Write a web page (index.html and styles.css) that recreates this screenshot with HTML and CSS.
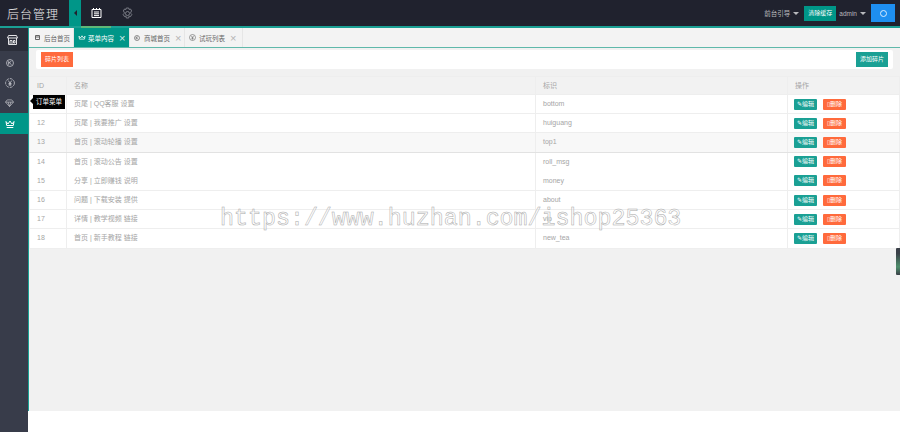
FILE: index.html
```html
<!DOCTYPE html>
<html lang="zh-CN">
<head>
<meta charset="utf-8">
<title>后台管理</title>
<link rel="stylesheet" href="styles.css">
</head>
<body>
<header class="header">
  <div class="logo">后台管理</div>
  <div class="toggle"><span class="toggle-arrow"></span></div>
  <div class="nav-icon nav-icon-active">
    <svg width="11" height="10" viewBox="0 0 11 10" fill="none" stroke="#fff" stroke-width="1"><path d="M1 1.500h9v8H1zM2.500 0v2M5.500 0v2M8.500 0v2M3 4h5M3 5.800h5M3 7.600h5"/></svg>
  </div>
  <div class="nav-icon nav-icon-gear">
    <svg width="13" height="13" viewBox="0 0 13 13" fill="none" stroke="#8d8f98" stroke-width=".8"><path d="M5.300 1h2.400l.4 1.500 1.400-.5 1.200 2-1 1.100.1 1.300 1 1-1.200 2.100-1.500-.4-.4 1.900H5.300l-.4-1.900-1.500.4-1.200-2.100 1-1 .1-1.300-1-1.100 1.200-2 1.400.5z"/><circle cx="6.500" cy="6.500" r="2"/></svg>
  </div>
  <div class="header-right">
    <span class="top-link">前台引导<i class="caret"></i></span>
    <span class="clear-btn">清除缓存</span>
    <span class="top-link admin">admin<i class="caret"></i></span>
    <span class="refresh"><span class="refresh-ring"></span></span>
  </div>
</header>
<div class="body-row">
  <aside class="sidebar">
    <div class="side-top">
      <svg width="11" height="10" viewBox="0 0 11 10" fill="none" stroke="#e4e4e6" stroke-width="1"><path d="M1.500.500h8l1 2.500H.5zM1.500 3v6.500h8V3M3 5.500h2v4H3zM6.500 5.500h1.500V8H6.500z"/></svg>
    </div>
    <div class="side-item">
      <svg width="8" height="8" viewBox="0 0 9 9" fill="none" stroke="#c9cad0" stroke-width=".9"><circle cx="4.500" cy="4.500" r="3.900"/><path d="M3 2.500v4M3 4.500l3-2M3.800 4l2.200 2.500"/></svg>
    </div>
    <div class="side-item">
      <svg width="10" height="10" viewBox="0 0 10 10" fill="none" stroke="#c9cad0" stroke-width=".8"><circle cx="5" cy="5" r="4.400" stroke-dasharray="3 1"/><path d="M3.200 2.500L5 5l1.800-2.500M5 5v3M3.500 5.500h3M3.500 6.800h3"/></svg>
    </div>
    <div class="side-item">
      <svg width="9" height="8" viewBox="0 0 10 9" fill="none" stroke="#b5b6bc" stroke-width=".9"><path d="M2.500 1h5L9.500 3.500 5 8.500.5 3.500zM.5 3.500h9M3.500 3.500L5 8.500l1.500-5"/></svg>
    </div>
    <div class="side-item side-active">
      <svg width="10" height="8" viewBox="0 0 10 8" fill="none" stroke="#fff" stroke-width="1"><path d="M1 1.500l2 2.500L5 1l2 3 2-2.500-.7 4H1.700zM1.700 7.500h6.600"/></svg>
    </div>
  </aside>
  <main class="main">
    <nav class="tabs">
      <div class="tab tab-home">
        <svg class="tab-icon" width="5" height="5" viewBox="0 0 5 5" fill="none" stroke="#555" stroke-width=".9"><path d="M.5.500h4v4h-4zM.5 2h4"/></svg>后台首页
      </div>
      <div class="tab tab-active">
        <svg class="tab-icon" width="8" height="6" viewBox="0 0 10 8" fill="none" stroke="#fff" stroke-width="1"><path d="M1 1.500l2 2.500L5 1l2 3 2-2.500-.7 4H1.700z"/></svg>菜单内容<span class="close">×</span>
      </div>
      <div class="tab tab-shop">
        <svg class="tab-icon" width="6" height="6" viewBox="0 0 6 6" fill="none" stroke="#666" stroke-width=".7"><circle cx="3" cy="3" r="2.500"/><path d="M2.200 1.700v2.600M2.200 3l1.700-1.300M2.600 2.800l1.300 1.500"/></svg>商城首页<span class="close">×</span>
      </div>
      <div class="tab tab-list">
        <svg class="tab-icon" width="7" height="7" viewBox="0 0 7 7" fill="none" stroke="#777" stroke-width=".7"><circle cx="3.500" cy="3.500" r="3"/><path d="M2.300 1.800l1.200 1.700 1.200-1.700M3.500 3.500v2M2.500 3.800h2M2.500 4.700h2"/></svg>试玩列表<span class="close">×</span>
      </div>
    </nav>
    <section class="toolbar">
      <span class="btn btn-orange">碎片列表</span>
      <span class="btn btn-teal">添加碎片</span>
    </section>
    <table class="data">
      <colgroup><col class="c-id"><col class="c-name"><col class="c-key"><col class="c-op"></colgroup>
      <thead>
        <tr><th>ID</th><th>名称</th><th>标识</th><th>操作</th></tr>
      </thead>
      <tbody>
        <tr><td>11</td><td>页尾 | QQ客服 设置</td><td>bottom</td><td class="ops"><span class="act act-edit">✎编辑</span><span class="act act-del">▯删除</span></td></tr>
        <tr><td>12</td><td>页尾 | 我要推广 设置</td><td>huiguang</td><td class="ops"><span class="act act-edit">✎编辑</span><span class="act act-del">▯删除</span></td></tr>
        <tr class="row-hover"><td>13</td><td>首页 | 滚动轮播 设置</td><td>top1</td><td class="ops"><span class="act act-edit">✎编辑</span><span class="act act-del">▯删除</span></td></tr>
        <tr class="row-noline"><td>14</td><td>首页 | 滚动公告 设置</td><td>roll_msg</td><td class="ops"><span class="act act-edit">✎编辑</span><span class="act act-del">▯删除</span></td></tr>
        <tr><td>15</td><td>分享 | 立即赚钱 说明</td><td>money</td><td class="ops"><span class="act act-edit">✎编辑</span><span class="act act-del">▯删除</span></td></tr>
        <tr><td>16</td><td>问题 | 下载安装 提供</td><td>about</td><td class="ops"><span class="act act-edit">✎编辑</span><span class="act act-del">▯删除</span></td></tr>
        <tr><td>17</td><td>详情 | 教学视频 链接</td><td>vip</td><td class="ops"><span class="act act-edit">✎编辑</span><span class="act act-del">▯删除</span></td></tr>
        <tr><td>18</td><td>首页 | 新手教程 链接</td><td>new_tea</td><td class="ops"><span class="act act-edit">✎编辑</span><span class="act act-del">▯删除</span></td></tr>
      </tbody>
    </table>
  </main>
</div>
<div class="tooltip">订单菜单</div>
<div class="side-handle"></div>
<div class="watermark">https://www.huzhan.com/ishop25363</div>
</body>
</html>
```
FILE: styles.css
```css
* { box-sizing: border-box; }
html, body { margin: 0; height: 432px; overflow: hidden; background: #fff; }
body { position: relative; font-family: "Liberation Sans", "Noto Sans CJK SC", sans-serif; font-size: 7px; color: #999; }

.header { display: flex; height: 28px; background: #20222e; box-shadow: inset 0 -2px 0 #1aa094; }
.logo { width: 69px; padding: 6px 0 0 7px; font-size: 12px; line-height: 15px; letter-spacing: 1px; font-weight: 300; color: #f0f0f0; font-family: "Noto Sans CJK SC", sans-serif; }
.toggle { width: 12px; height: 26px; background: #009688; display: flex; align-items: center; justify-content: center; }
.toggle-arrow { width: 0; height: 0; border-style: solid; border-width: 3px 3px 3px 0; border-color: transparent #20222e transparent transparent; }
.nav-icon { width: 30px; height: 28px; padding-bottom: 2px; display: flex; align-items: center; justify-content: center; }
.nav-icon-active { border-bottom: 2px solid #5fb878; padding: 0 0 1px; }
.nav-icon-gear { padding-left: 2px; }
.header-right { margin-left: auto; display: flex; align-items: flex-start; padding-right: 5px; }
.top-link { color: #b8b9bd; height: 26px; display: flex; align-items: center; font-size: 6.500px; }
.caret { margin-left: 3px; margin-top: 1px; width: 0; height: 0; border-style: solid; border-width: 3px 3px 0; border-color: #b8b9bd transparent transparent; }
.clear-btn { margin: 6px 3px 0 5px; width: 32px; height: 15px; background: #009688; color: #fff; font-size: 6px; line-height: 15px; text-align: center; }
.refresh { margin: 4px 0 0 5px; width: 24px; height: 18px; background: #1e8ff0; display: flex; align-items: center; justify-content: center; }
.refresh-ring { width: 7px; height: 7px; border: 1px solid #d8ecff; border-radius: 50%; }

.body-row { display: flex; height: 404px; }
.sidebar { width: 28px; flex: none; background: #383c4a; }
.side-top { height: 23px; padding-left: 7px; background: #2b2e39; display: flex; align-items: center; }
.side-item { height: 20px; padding-left: 5px; display: flex; align-items: center; }
.side-item:nth-child(2) { margin-top: 2px; padding-left: 6px; }
.side-active { background: #009688; height: 21px; }

.main { flex: 1; height: 383px; background: #f1f1f1; border-left: 1px solid #1aa094; min-width: 0; }
.tabs { display: flex; height: 20px; background: #f3f3f3; border-bottom: 1px solid #5fb8aa; color: #666; font-size: 6.500px; }
.tab { display: flex; align-items: center; height: 19px; border-right: 1px solid #e6e6e6; padding-left: 6px; white-space: nowrap; }
.tab-home { width: 45px; }
.tab-active { width: 56px; background: #009688; color: #fff; padding-left: 4px; }
.tab-shop { width: 55px; padding-left: 4px; }
.tab-list { width: 58px; padding-left: 4px; }
.tab-icon { margin-right: 4px; flex: none; }
.tab-active .tab-icon { margin-right: 2px; }
.tab-list .tab-icon { margin-right: 3px; }
.close { margin-left: 5px; font-size: 11px; line-height: 10px; color: #b5b5b5; }
.tab-active .close { color: #cfe9e6; }

.toolbar { display: flex; justify-content: space-between; align-items: center; margin: 2px 7px 7px; height: 19px; padding: 0 5px; background: #fff; border-radius: 2px; }
.btn { height: 15px; width: 32px; color: #fff; font-size: 6px; line-height: 15px; text-align: center; }
.btn-orange { background: #ff6a3c; }
.btn-teal { background: #1aa094; }

.data { width: 871px; table-layout: fixed; border-collapse: collapse; background: #fff; }
.c-id { width: 37px; }
.c-key { width: 252px; }
.c-op { width: 112px; }
.data th, .data td { height: 19.200px; padding: 0 0 0 7px; border: 1px solid #eee; font-weight: 400; text-align: left; color: #a5a5a5; font-size: 7px; line-height: 10px; white-space: nowrap; }
.data th { background: #f2f2f2; height: 18px; }
.row-hover td { background: #f8f8f8; border-top-color: #e2e2e2; border-bottom-color: #e2e2e2; }
.row-noline td { border-bottom-color: transparent; }
.data .ops { font-size: 0; padding-left: 6px; }
.act { display: inline-block; width: 23px; height: 11px; line-height: 11px; color: #fff; font-size: 6px; text-align: center; vertical-align: middle; border-radius: 1px; }
.act-edit { background: #1aa094; margin-right: 6px; }
.act-del { background: #ff6a3c; }

.tooltip { position: absolute; left: 33px; top: 95px; width: 32px; height: 14px; background: #000; color: #fff; font-size: 6.500px; line-height: 14px; text-align: center; }
.tooltip::before { content: ""; position: absolute; left: -3px; top: 3px; border-style: solid; border-width: 3px 3px 3px 0; border-color: transparent #000 transparent transparent; }
.side-handle { position: absolute; right: 0; top: 248px; width: 4px; height: 27px; border-radius: 1px 0 0 1px; background: linear-gradient(#3a4048 20%, #4f8f6c 70%, #3a4048); }
.watermark { position: absolute; left: 220px; top: 204px; font-family: "Liberation Mono", monospace; font-size: 23.300px; line-height: 30px; color: rgba(255,255,255,.5); -webkit-text-stroke: .5px #a8a8a8; opacity: .99; white-space: nowrap; pointer-events: none; }
```
